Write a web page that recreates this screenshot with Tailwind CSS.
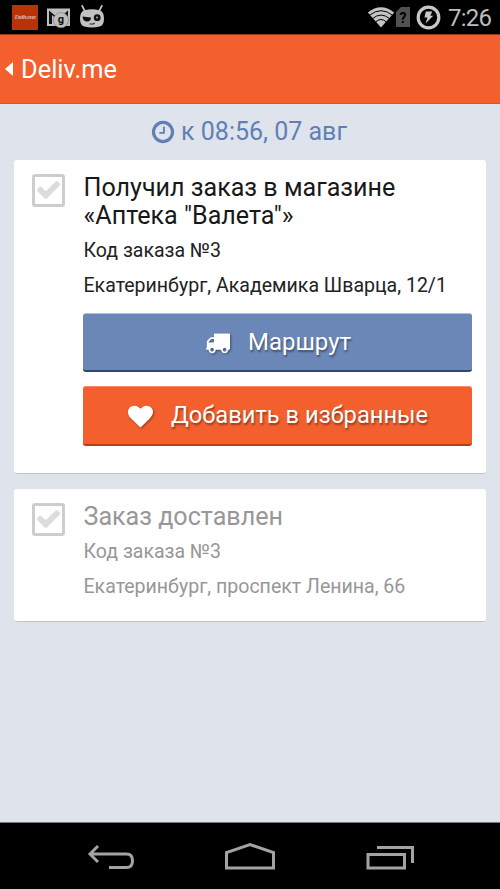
<!DOCTYPE html>
<html lang="ru">
<head>
<meta charset="utf-8">
<title>Deliv.me</title>
<script src="https://cdn.jsdelivr.net/npm/@tailwindcss/browser@4"></script>
</head>
<body class="bg-black font-['Roboto','Noto_Sans',sans-serif]">
<svg class="hidden">
  <symbol id="check" viewBox="0 0 1792 1792"><path d="M1671 566q0 40-28 68l-724 724-136 136q-28 28-68 28t-68-28l-136-136-362-362q-28-28-28-68t28-68l136-136q28-28 68-28t68 28l294 295 656-657q28-28 68-28t68 28l136 136q28 28 28 68z"/></symbol>
</svg>
<div class="flex h-[889px] w-[500px] flex-col overflow-hidden">
  <!-- Status bar -->
  <div class="flex h-[34px] shrink-0 items-center bg-black">
    <div class="ml-3 flex h-[25px] w-[26px] items-center justify-center bg-[#b93208] font-['Liberation_Serif',serif] text-[7px] font-bold italic tracking-[-0.5px] text-[#d6b5a9]">Deliv.me</div>
    <svg class="ml-[9px] h-[22px] w-[24px] shrink-0" viewBox="0 0 24 22">
      <path d="M0 2.500h23v17.500H0z" fill="#bebebe"/>
      <path d="M2 4.500l9.500 8L21 4.500V18h-2V8l-7.500 7L5 9v9H2z" fill="#111"/>
      <circle cx="14" cy="14.200" r="7.600" fill="#bebebe" stroke="#777" stroke-width=".6"/>
      <text x="14" y="17" text-anchor="middle" font-family="Roboto" font-size="11" font-weight="700" fill="#111">g</text>
    </svg>
    <svg class="ml-2 h-[24px] w-[26px] shrink-0" viewBox="0 0 26 24">
      <path d="M3.200 .8l3 6M22.800 .8l-3 6" stroke="#c2c2c2" stroke-width="1.800" stroke-linecap="round"/>
      <path d="M5.500 5.300Q13 3.200 20.500 5.300Q25 6.500 25 13.500T20.500 21.500Q13 23.500 5.500 21.500Q1 20.500 1 13.500T5.500 5.300z" fill="#c2c2c2"/>
      <path d="M3.500 11.500l8.500 1q0 4-4 4t-4.500-5z" fill="#111"/>
      <circle cx="18.200" cy="12.700" r="3.400" fill="#111"/><circle cx="18" cy="12.500" r=".9" fill="#c2c2c2"/>
      <path d="M10.500 19h4l1-1" fill="none" stroke="#222" stroke-width="1.200"/>
    </svg>
    <svg class="ml-auto h-[22px] w-[28px] shrink-0" viewBox="0 0 28 22">
      <path d="M.8 6.500Q14-4 27.200 6.500L14 21.500z" fill="#c4c4c4"/>
      <path d="M2.500 9.200Q14 .2 25.500 9.200M5.500 12.600Q14 5.500 22.500 12.600M8.500 16Q14 11 19.500 16" fill="none" stroke="#000" stroke-width="1"/>
    </svg>
    <svg class="ml-px h-[20px] w-[14px] shrink-0" viewBox="0 0 14 20">
      <path d="M5 0h9v20H0V5z" fill="#515151"/>
      <text x="7" y="16" text-anchor="middle" font-family="Roboto" font-size="14" font-weight="700" fill="#000">?</text>
    </svg>
    <svg class="ml-[6px] h-[25px] w-[25px] shrink-0" viewBox="0 0 25 25">
      <circle cx="12.500" cy="12.500" r="10.300" fill="none" stroke="#c8c8c8" stroke-width="3.200"/>
      <path d="M9.800 6.500h6.500l-2 4.200h3L9.500 18.500l2-6H8.500z" fill="#c8c8c8"/>
    </svg>
    <div class="mr-[9px] ml-[7px] w-[43px] whitespace-nowrap pt-[2px] text-[24px] leading-[34px] tracking-[-0.8px] text-[#bdbdbd]">7:26</div>
  </div>

  <!-- App header -->
  <div class="flex h-[70px] shrink-0 items-center border-t border-b border-t-[#9b3816] border-b-[#e9501b] bg-[#f3602d]">
    <svg class="ml-[5px] h-[14px] w-2" viewBox="0 0 8 14"><path d="M8 0v14L0 7z" fill="#fff"/></svg>
    <div class="ml-2 text-[25.4px] leading-[30px] text-white">Deliv.me</div>
  </div>

  <!-- Order steps -->
  <div class="flex h-[719px] shrink-0 flex-col border-b border-[#77797e] bg-[#dfe3ec] px-[14px]">
    <div class="flex h-[56px] items-center justify-center gap-[5px] pr-[3px] text-[25px] text-[#6080b5]">
      <svg class="h-[26px] w-[26px]" viewBox="0 0 1792 1792" fill="currentColor"><path d="M1024 544v448q0 14-9 23t-23 9h-320q-14 0-23-9t-9-23v-64q0-14 9-23t23-9h224v-352q0-14 9-23t23-9h64q14 0 23 9t9 23zm416 352q0-148-73-273t-198-198-273-73-273 73-198 198-73 273 73 273 198 198 273 73 273-73 198-198 73-273zm224 0q0 209-103 385.500t-279.500 279.500-385.500 103-385.500-103-279.500-279.500-103-385.500 103-385.500 279.500-279.500 385.500-103 385.500 103 279.500 279.500 103 385.500z"/></svg>
      <span class="whitespace-nowrap leading-[28px]">к 08:56, 07 авг</span>
    </div>

    <section class="flex h-[314px] shrink-0 gap-[18px] rounded-[3px] border-b border-[#c3c3c3] bg-white pt-[14px] pr-[14px] pl-[18px]">
      <div class="flex h-[33px] w-[33px] shrink-0 items-center justify-center rounded-[3px] border-3 border-[#cdcdcd] pb-[3px]">
        <svg class="h-[27px] w-[27px] shrink-0 fill-[#dcdcdc]"><use href="#check"/></svg>
      </div>
      <div class="flex min-w-0 flex-1 flex-col">
        <h2 class="whitespace-nowrap pl-[0.5px] text-[25.1px] leading-[28px] text-[#181818]">Получил заказ в магазине<br>«Аптека "Валета"»</h2>
        <p class="mt-[9px] whitespace-nowrap pl-[0.5px] text-[19.55px] leading-[24px] text-[#222]">Код заказа №3</p>
        <p class="mt-[11px] whitespace-nowrap pl-[0.5px] text-[19.55px] leading-[24px] text-[#222]">Екатеринбург, Академика Шварца, 12/1</p>
        <button class="mt-[15px] flex h-[59px] shrink-0 items-center justify-center gap-[18px] rounded-[3px] border-t border-b-2 border-t-[#a9c0ea] border-b-[#2e4872] bg-[#6a87b7] pl-px text-[24px] text-white">
          <svg class="h-[25px] w-[25px] drop-shadow-[1px_1px_1px_rgba(0,0,0,0.4)]" viewBox="0 0 1792 1792" fill="currentColor"><path d="M640 1408q0-52-38-90t-90-38-90 38-38 90 38 90 90 38 90-38 38-90zm-384-512h384v-256h-158q-13 0-22 9l-195 195q-9 9-9 22v30zm1280 512q0-52-38-90t-90-38-90 38-38 90 38 90 90 38 90-38 38-90zm256-1088v1024q0 15-4 26.500t-13.500 18.500-16.500 11.500-23.500 6-22.500 2-25.500 0-22.500-.5q0 106-75 181t-181 75-181-75-75-181h-384q0 106-75 181t-181 75-181-75-75-181h-64q-3 0-22.500.5t-25.500 0-22.500-2-23.500-6-16.500-11.500-13.500-18.500-4-26.500q0-26 19-45t45-19v-320q0-8-.5-35t0-38 2.500-34.500 6.500-37 14-30.500 22.500-30l198-198q19-19 50.500-32t58.500-13h160v-192q0-26 19-45t45-19h1024q26 0 45 19t19 45z"/></svg>
          <span class="text-shadow-[1px_2px_2px_rgba(0,0,0,0.4)]">Маршрут</span>
        </button>
        <button class="mt-[14px] flex h-[60px] shrink-0 items-center justify-center gap-[18px] rounded-[3px] border-t border-b-2 border-t-[#fb8a63] border-b-[#be3d10] bg-[#f3602d] pt-px pl-px text-[23.7px] text-white">
          <svg class="h-[25px] w-[25px] drop-shadow-[1px_1px_1px_rgba(0,0,0,0.4)]" viewBox="0 0 1792 1792" fill="currentColor"><path d="M896 1664q-26 0-44-18l-624-602q-10-8-27.500-26t-55.500-65.500-68-97.500-53.500-121-23.500-138q0-220 127-344t351-124q62 0 126.500 21.500t120 58 95.500 68.500 76 68q36-36 76-68t95.500-68.500 120-58 126.500-21.500q224 0 351 124t127 344q0 221-229 450l-623 600q-18 18-44 18z"/></svg>
          <span class="whitespace-nowrap text-shadow-[1px_2px_2px_rgba(0,0,0,0.4)]">Добавить в избранные</span>
        </button>
      </div>
    </section>

    <section class="mt-[15px] flex h-[133px] shrink-0 gap-[18px] rounded-[3px] border-b border-[#c3c3c3] bg-white pt-[14px] pl-[18px]">
      <div class="flex h-[33px] w-[33px] shrink-0 items-center justify-center rounded-[3px] border-3 border-[#cdcdcd] pb-[3px]">
        <svg class="h-[27px] w-[27px] shrink-0 fill-[#dcdcdc]"><use href="#check"/></svg>
      </div>
      <div class="text-[#979797]">
        <h2 class="whitespace-nowrap pl-[0.5px] text-[25.1px] leading-[28px]">Заказ доставлен</h2>
        <p class="mt-[9px] whitespace-nowrap pl-[0.5px] text-[19.55px] leading-[24px]">Код заказа №3</p>
        <p class="mt-[11px] whitespace-nowrap pl-[0.5px] text-[19.55px] leading-[24px]">Екатеринбург, проспект Ленина, 66</p>
      </div>
    </section>
  </div>

  <!-- Navigation bar -->
  <div class="flex min-h-0 flex-1 bg-black">
    <svg class="h-[66px] w-[500px]" viewBox="0 823 500 66" fill="none" stroke="#a3a3a3" stroke-width="3">
      <path d="M90 854h36.500q6 0 6 6.800t-6 6.800H109M98 846l-8 8 8 8"/>
      <path d="M226.500 868v-15.500L250 844.500l23.500 8v15.500z"/>
      <path d="M368 854.500h36.500v13.500H368zM377 847.500h35.500V863"/>
    </svg>
  </div>
</div>
</body>
</html>
